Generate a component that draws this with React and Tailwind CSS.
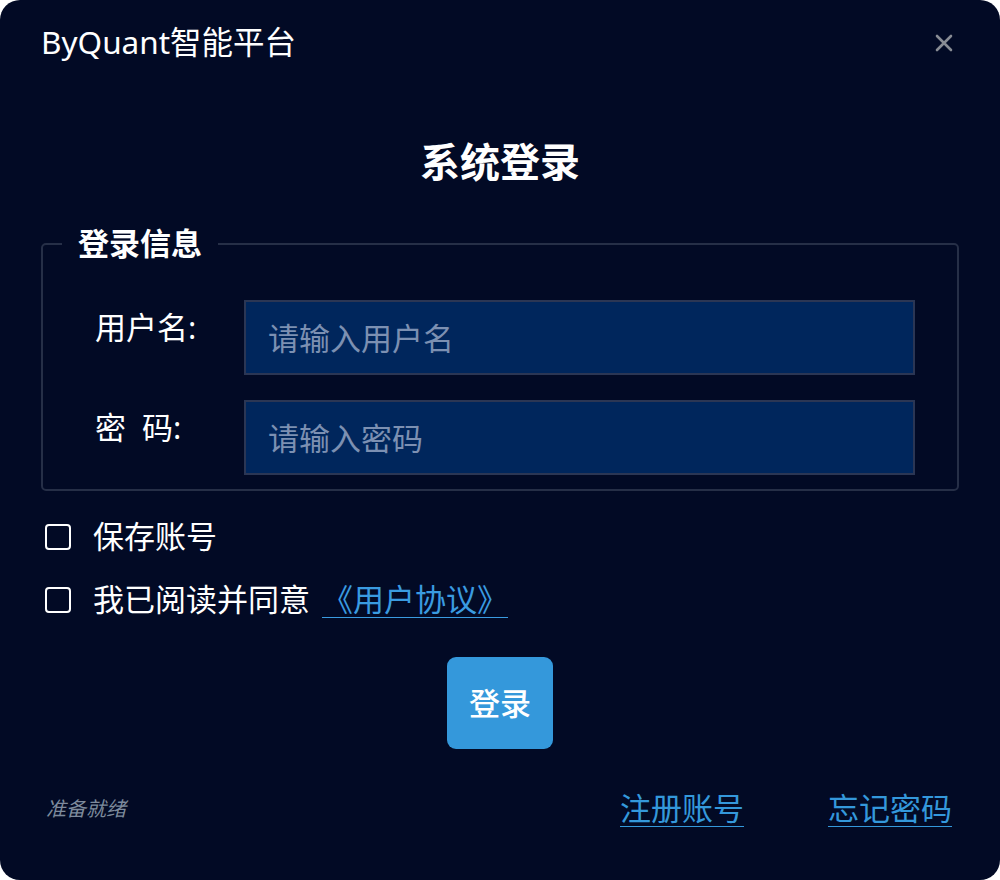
export default function App() {
  const font = { fontFamily: '"Noto Sans", "Noto Sans CJK SC", sans-serif' };

  return (
    <div className="w-[1000px] h-[880px] bg-white" style={font}>
      <div className="w-full h-full bg-[#020a25] rounded-[20px] flex flex-col text-white">
        {/* title bar */}
        <div className="flex items-center justify-between pl-[41px] pr-[47px] pt-[20px] h-[64px]">
          <span className="text-[31.5px] leading-none">ByQuant智能平台</span>
          <svg width="18" height="18" viewBox="0 0 18 18" className="mt-[2px]">
            <path d="M2 2 L16 16 M16 2 L2 16" stroke="#888c94" strokeWidth="2.6" strokeLinecap="round" />
          </svg>
        </div>

        <h1 className="text-center text-[40px] font-bold mt-[78px] leading-none">系统登录</h1>

        {/* fieldset */}
        <fieldset className="mx-[41px] mt-[46px] border-2 border-[#262f47] rounded-[5px] p-0 pb-[14px]">
          <legend className="ml-[19px] px-[16px] text-[31px] font-semibold leading-none">登录信息</legend>
          <div className="flex flex-col gap-[25px] pt-[41px] pl-[52px] pr-[42px]">
            <div className="flex items-start">
              <label className="w-[149px] text-[31px] leading-none mt-[12px]">用户名:</label>
              <input
                placeholder="请输入用户名"
                className="flex-1 h-[75px] bg-[#00265c] border-2 border-[#2b3654] px-[22px] text-[31px] text-white placeholder:text-[#7c90b2] outline-none"
              />
            </div>
            <div className="flex items-start">
              <label className="w-[149px] text-[31px] leading-none mt-[12px] whitespace-pre">密  码:</label>
              <input
                type="password"
                placeholder="请输入密码"
                className="flex-1 h-[75px] bg-[#00265c] border-2 border-[#2b3654] px-[22px] text-[31px] text-white placeholder:text-[#7c90b2] outline-none"
              />
            </div>
          </div>
        </fieldset>

        {/* checkboxes */}
        <div className="flex flex-col gap-[32px] pl-[45px] mt-[30px]">
          <label className="flex items-center gap-[22px] text-[31px] leading-none">
            <span className="w-[26px] h-[26px] border-[2.5px] border-white rounded-[4px]" />
            保存账号
          </label>
          <label className="flex items-center gap-[22px] text-[31px] leading-none">
            <span className="w-[26px] h-[26px] border-[2.5px] border-white rounded-[4px]" />
            <span>
              我已阅读并同意
              <a className="ml-[12px] text-[#3a9be0] underline underline-offset-[6px] decoration-1">《用户协议》</a>
            </span>
          </label>
        </div>

        <div className="flex justify-center mt-[42px]">
          <button className="w-[106px] h-[92px] bg-[#3498db] rounded-[9px] text-[31px] font-medium text-white">登录</button>
        </div>

        {/* footer */}
        <div className="flex items-center justify-between pl-[46px] pr-[48px] mt-[44px]">
          <span className="text-[20px] italic text-[#7d8a9c]">准备就绪</span>
          <div className="flex gap-[84px] text-[31px] leading-none text-[#3498db]">
            <a className="underline underline-offset-[6px] decoration-1">注册账号</a>
            <a className="underline underline-offset-[6px] decoration-1">忘记密码</a>
          </div>
        </div>
      </div>
    </div>
  );
}
